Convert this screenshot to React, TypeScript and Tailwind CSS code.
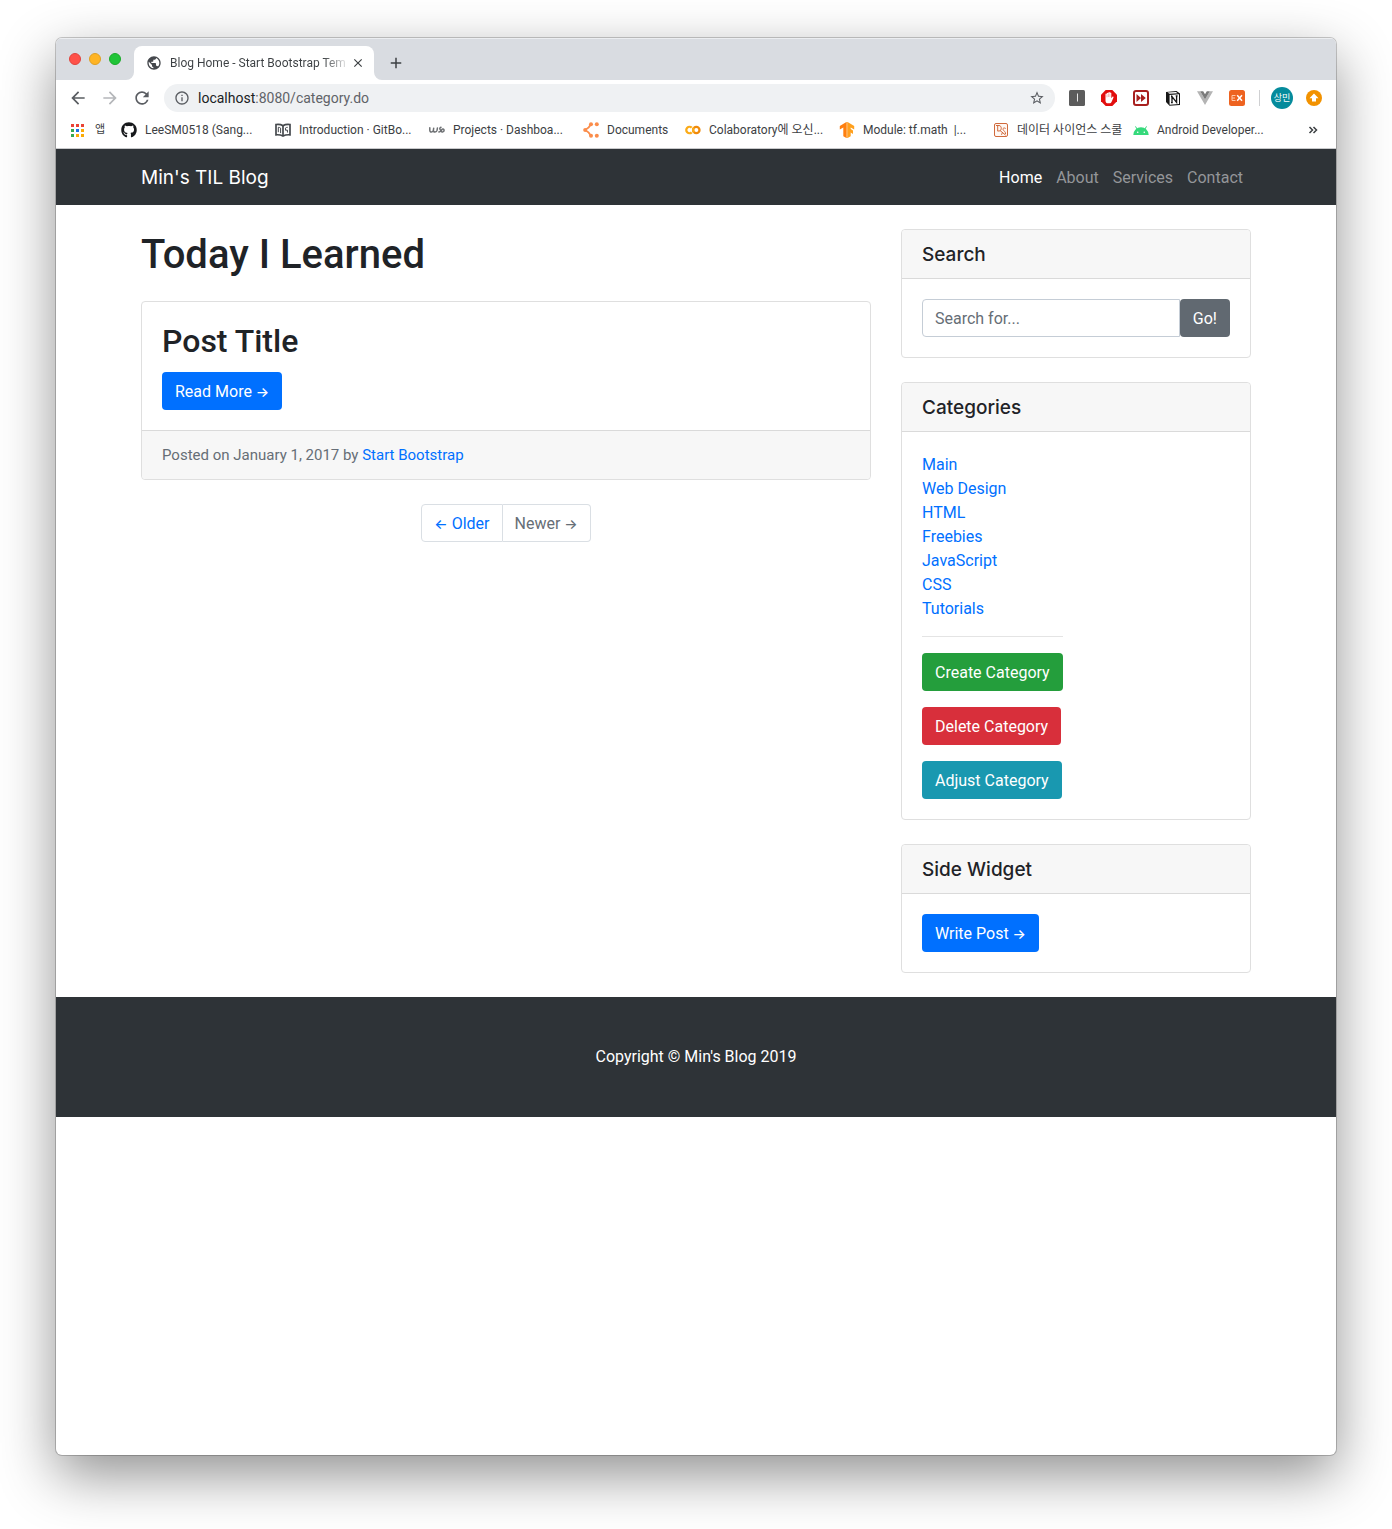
import type { ReactNode } from "react";
import { FaGithub } from "react-icons/fa";
import {
  MdAdd,
  MdArrowBack,
  MdArrowForward,
  MdClose,
  MdInfoOutline,
  MdPublic,
  MdRefresh,
  MdStarBorder,
} from "react-icons/md";

/* ---------- bookmark icons ---------- */

function AppsIcon() {
  const colors = ["#ea4335", "#ea4335", "#ea4335", "#34a853", "#1a73e8", "#fbab05", "#34a853", "#fbab05", "#fbab05"];
  return (
    <svg viewBox="0 0 16 16" className="size-4">
      {colors.map((c, i) => (
        <rect key={i} x={1 + (i % 3) * 5} y={2 + Math.floor(i / 3) * 5} width="3" height="3" fill={c} />
      ))}
    </svg>
  );
}

function GitBookIcon() {
  return (
    <svg viewBox="0 0 16 16" className="size-4" fill="none" stroke="#45494d" strokeWidth="1.700">
      <path d="M1 2.500c2.800-.4 5-.1 7 1.200 2-1.300 4.200-1.600 7-1.200v10.300c-2.800-.2-5 .1-7 1.300-2-1.200-4.200-1.500-7-1.300z" />
      <path d="M8 3.700V14" />
      <path d="M3.300 5.300c1 0 1.800.3 2.300.8v5M3.300 5.300v4.900M12.700 5.300c-1 0-1.700.3-2.300.8l.2 2.200 1.700-.3.200 2.500" strokeWidth="1" />
    </svg>
  );
}

function WsIcon() {
  return (
    <svg viewBox="0 0 16 16" className="size-4" fill="none" stroke="#6d7073" strokeWidth="1.500" strokeLinecap="round" strokeLinejoin="round">
      <path d="M.8 5.800v2.400c0 2.600 3.200 2.400 3.600 0l.3-2-.3 2c0 2.400 3.200 2.400 3.700 0l.3-2.200" />
      <path d="M12 5.200c-1.500.6-1.500 1.800-.7 2.500 1 .9.300 2.300-1.500 2.200M12.200 9.300c.7 1.200 2.900.6 2.900-1.100 0-1.500-1.700-1.700-2.300-.6-.3.600-.4 1.100-.6 1.700z" />
    </svg>
  );
}

function DocumentsIcon() {
  return (
    <svg viewBox="0 0 16 16" className="size-4" fill="#fb8d4b">
      <path d="M8 2.200C6.500 5 5 6.500 2.200 8 5 9.500 6.500 11 8 13.800" fill="none" stroke="#fb8d4b" strokeWidth="1.800" />
      <circle cx="2.200" cy="8" r="2" />
      <circle cx="8" cy="2.200" r="2" />
      <circle cx="8" cy="13.800" r="2" />
      <circle cx="13.800" cy="2.200" r="2" />
      <circle cx="13.800" cy="13.800" r="2" />
    </svg>
  );
}

function ColabIcon() {
  return (
    <svg viewBox="0 0 16 16" className="size-4" fill="none" strokeWidth="2.300">
      <path d="M6.700 5.700a3.200 3.200 0 1 0 0 4.600" stroke="#fbab18" />
      <circle cx="11.300" cy="8" r="3.200" stroke="#f08a0a" />
      <path d="M9 5.700a3.200 3.200 0 0 0 0 4.600" stroke="#fbab18" />
    </svg>
  );
}

function TensorFlowIcon() {
  return (
    <svg viewBox="0 0 16 16" className="size-4">
      <path d="M7.400 0v16l-3.100-1.800V5.500L.8 7.500V3.900z" fill="#ff7f10" />
      <path d="M8.600 0v16l3.100-1.800v-3.600l2.300 1.300V8.500l-2.300-1.400V5.500l3.500 2V3.900z" fill="#ffa01e" />
      <path d="M7.400 0h1.200v16H7.400z" fill="#ff9116" />
    </svg>
  );
}

function DataSchoolIcon() {
  return (
    <svg viewBox="0 0 16 16" className="size-4" fill="none" stroke="#d06a3c">
      <rect x="1.500" y="1.500" width="13" height="13" rx="1.500" fill="#fff8f4" />
      <path d="M3 3.500h3c3 0 3 5.500 0 5.500H4.500M4.700 3.500V9M12.700 6.500c-1.500-1.200-3.400-.2-2.500 1.300.6 1.200 2.700 2.200 2.300 4.200M7 8.500l5.700 4.700M8.500 12.800l1-2.500" />
    </svg>
  );
}

function AndroidIcon() {
  return (
    <svg viewBox="0 0 16 16" className="size-4">
      <path d="M.3 13a7.700 7.700 0 0 1 15.400 0z" fill="#35d97b" />
      <path d="M4 7 2.500 4.400M12 7l1.500-2.600" stroke="#35d97b" strokeWidth="1" />
      <circle cx="4.700" cy="10.200" r=".8" fill="#fff" />
      <circle cx="11.300" cy="10.200" r=".8" fill="#fff" />
    </svg>
  );
}

/* ---------- extension icons ---------- */

function BarExtension() {
  return (
    <svg viewBox="0 0 16 16" className="size-4">
      <rect width="16" height="16" rx="1.500" fill="#5c5c5c" />
      <path d="M8.500 3.500v8" stroke="#e8e8e8" strokeWidth="1" />
    </svg>
  );
}

function AdBlockExtension() {
  return (
    <svg viewBox="0 0 16 16" className="size-4">
      <path d="M4.700 0h6.600L16 4.700v6.600L11.300 16H4.700L0 11.300V4.700z" fill="#e20e0e" />
      <path
        d="M4.500 8V4.300a.7.700 0 0 1 1.400 0V3.200a.8.800 0 0 1 1.500 0v-.6a.8.800 0 0 1 1.500 0v.7a.7.700 0 0 1 1.400 0v5l1-1.400c.5-.6 1.400-.2 1.200.6l-2 4.500c-.4.900-1 1.300-2 1.300H7.200c-1.700 0-2.700-1-2.700-2.600z"
        fill="#fff"
      />
      <path d="M5.900 4.300v3M7.400 3.500v3.500M8.900 3.500v3.500" stroke="#e20e0e" strokeWidth=".3" />
    </svg>
  );
}

function FastForwardExtension() {
  return (
    <svg viewBox="0 0 16 16" className="size-4">
      <rect x="1" y="1" width="14" height="14" rx="2" fill="#fff" stroke="#a8201f" strokeWidth="2" />
      <path d="M3.500 4v8L8 8zM8 4v8l4.800-4z" fill="#a8201f" />
    </svg>
  );
}

function NotionExtension() {
  return (
    <svg viewBox="0 0 16 16" className="size-4">
      <path d="M1 2 11.500 1 15 3.500V15l-10.500.8L1 12z" fill="#161616" />
      <path d="M2.500 2.600 11 1.900l1.800 1.300-8.300.6z" fill="#fff" />
      <path d="M4.600 4.900 14 4.300v9.800l-9.400.6z" fill="#fff" />
      <path d="M7 12.700V6.500l4.600 5.800V5.900M6 6.500h1.600M10.700 5.900h1.900M6 12.700h1.800" fill="none" stroke="#161616" strokeWidth="1.300" />
    </svg>
  );
}

function VueExtension() {
  return (
    <svg viewBox="0 0 16 16" className="size-4">
      <path d="M0 1.200h3.200L8 9.400l4.800-8.200H16L8 15z" fill="#b4b4b4" />
      <path d="M3.200 1.200h3L8 4.300l1.800-3.100h3L8 9.400z" fill="#7b7b7b" />
    </svg>
  );
}

function ExExtension() {
  return (
    <svg viewBox="0 0 16 16" className="size-4">
      <rect width="16" height="16" rx="2.500" fill="#ee6320" />
      <path d="M6.500 5.500H3v5h3.500M3 8h3" fill="none" stroke="#ffc9a8" strokeWidth="1" />
      <path d="m8.200 5.200 4.800 5.600M13 5.200l-4.800 5.600" stroke="#fff" strokeWidth="1.500" />
    </svg>
  );
}

function UpdateIcon() {
  return (
    <svg viewBox="0 0 16 16" className="size-4">
      <circle cx="8" cy="8" r="8" fill="#f29200" />
      <path d="m8 3.500 4.500 4.700H10v3.300H6V8.200H3.500z" fill="#fff" />
    </svg>
  );
}

/* ---------- browser chrome ---------- */

const bookmarks: { label: string; icon: ReactNode; width: string }[] = [
  { label: "LeeSM0518 (Sang...", icon: <FaGithub className="size-4 text-[#17191c]" />, width: "w-[138px]" },
  { label: "Introduction · GitBo...", icon: <GitBookIcon />, width: "w-[138px]" },
  { label: "Projects · Dashboa...", icon: <WsIcon />, width: "w-[138px]" },
  { label: "Documents", icon: <DocumentsIcon />, width: "w-[86px]" },
  { label: "Colaboratory에 오신...", icon: <ColabIcon />, width: "w-[138px]" },
  { label: "Module: tf.math  |...", icon: <TensorFlowIcon />, width: "w-[138px]" },
  { label: "데이터 사이언스 스쿨", icon: <DataSchoolIcon />, width: "w-[124px]" },
  { label: "Android Developer...", icon: <AndroidIcon />, width: "w-[138px]" },
];

function TabStrip() {
  return (
    <div className="flex h-[42px] items-end border-t border-[#eceef1] bg-[#d9dce1]">
      <div className="flex gap-2 self-center pb-0.5 pl-[13px]">
        <button aria-label="Close window" className="size-3 rounded-full border border-[#e0443e] bg-[#ff5149]" />
        <button aria-label="Minimize window" className="size-3 rounded-full border border-[#dfa023] bg-[#ffb424]" />
        <button aria-label="Zoom window" className="size-3 rounded-full border border-[#1aab29] bg-[#20c438]" />
      </div>
      <div className="relative ml-[13px] flex h-[34px] w-60 items-center rounded-t-lg bg-white pr-2 pl-3">
        <svg viewBox="0 0 8 8" className="absolute bottom-0 -left-2 size-2 fill-white">
          <path d="M8 0v8H0a8 8 0 0 0 8-8z" />
        </svg>
        <svg viewBox="0 0 8 8" className="absolute -right-2 bottom-0 size-2 fill-white">
          <path d="M0 0v8h8a8 8 0 0 1-8-8z" />
        </svg>
        <MdPublic className="size-4 shrink-0 text-[#45484d]" />
        <div className="ml-2 flex-1 bg-linear-to-r from-[#3c4043] from-85% to-transparent bg-clip-text text-xs whitespace-nowrap text-transparent">
          Blog Home - Start Bootstrap Tem
        </div>
        <button aria-label="Close tab" className="grid size-4 place-items-center">
          <MdClose className="size-3.5 text-[#3c4043]" />
        </button>
      </div>
      <button aria-label="New tab" className="ml-3 grid h-[34px] w-5 place-items-center">
        <MdAdd className="size-[18px] text-[#3c4043]" />
      </button>
    </div>
  );
}

function Toolbar() {
  return (
    <div className="flex h-9 items-center px-3.5 text-[#5a5d62]">
      <div className="mr-3 -ml-0.5 flex gap-3">
        <button aria-label="Back">
          <MdArrowBack className="size-5" />
        </button>
        <button aria-label="Forward" className="text-[#b5b7ba]">
          <MdArrowForward className="size-5" />
        </button>
        <button aria-label="Reload">
          <MdRefresh className="size-5" />
        </button>
      </div>
      <div className="flex h-7 min-w-0 flex-1 items-center rounded-full bg-[#eff1f3] px-2.5">
        <MdInfoOutline className="size-4 shrink-0" />
        <div className="ml-2 flex-1 text-sm text-[#5f6368]">
          <span className="text-[#202124]">localhost</span>:8080/category.do
        </div>
        <button aria-label="Bookmark this page">
          <MdStarBorder className="size-4" />
        </button>
      </div>
      <div className="ml-3.5 flex gap-4">
        <BarExtension />
        <AdBlockExtension />
        <FastForwardExtension />
        <NotionExtension />
        <VueExtension />
        <ExExtension />
      </div>
      <div className="mr-[11px] ml-3.5 h-4 w-px bg-[#cfd0d2]" />
      <button className="grid size-[22px] place-items-center rounded-full bg-[#058b9c] text-[9px] leading-none text-white">상민</button>
      <button aria-label="Update" className="ml-[13px]">
        <UpdateIcon />
      </button>
    </div>
  );
}

function BookmarksBar() {
  return (
    <div className="flex h-[33px] items-center gap-4 border-b border-[#c9cacc] px-3.5 pb-1 text-xs text-[#3c4043]">
      <a href="#" className="flex w-[35px] shrink-0 items-center justify-between whitespace-nowrap text-[11px]">
        <AppsIcon />앱
      </a>
      {bookmarks.map((b) => (
        <a key={b.label} href="#" className={`flex shrink-0 items-center gap-2 whitespace-pre ${b.width}`}>
          <span className="shrink-0">{b.icon}</span>
          {b.label}
        </a>
      ))}
      <button aria-label="More bookmarks" className="mr-1 ml-auto">
        <svg viewBox="0 0 10 10" className="size-2.5" fill="none" stroke="#3c4043" strokeWidth="1.500">
          <path d="m1.500 2 3 3-3 3M5.500 2l3 3-3 3" />
        </svg>
      </button>
    </div>
  );
}

/* ---------- blog ---------- */

const categories = ["Main", "Web Design", "HTML", "Freebies", "JavaScript", "CSS", "Tutorials"];

function Arrow({ children }: { children: string }) {
  return <span className="text-sm leading-none font-medium">{children}</span>;
}

function Button({ color, children }: { color: string; children: ReactNode }) {
  return <button className={`block h-[38px] rounded px-[13px] pt-px whitespace-nowrap text-white ${color}`}>{children}</button>;
}

function Widget({ title, children }: { title: string; children: ReactNode }) {
  return (
    <section className="mb-6 rounded border border-[#dfdfdf]">
      <h5 className="rounded-t border-b border-[#dadada] bg-[#f7f7f7] px-5 pt-[13px] pb-[11px] font-['Inter'] text-[19px] leading-6 font-medium">
        {title}
      </h5>
      <div className="p-5">{children}</div>
    </section>
  );
}

function NavBar() {
  return (
    <nav className="bg-[#2e3337]">
      <div className="mx-auto flex h-14 max-w-[1140px] items-center justify-between px-[15px] pt-0.5">
        <a href="#" className="font-['Inter'] text-[19px] text-white">
          Min's TIL Blog
        </a>
        <div className="flex gap-3.5 pr-2 text-[#949699]">
          <a href="#" className="text-white">
            Home
          </a>
          <a href="#">About</a>
          <a href="#">Services</a>
          <a href="#">Contact</a>
        </div>
      </div>
    </nav>
  );
}

function Posts() {
  return (
    <main className="w-2/3 px-[15px]">
      <h1 className="mt-[26px] mb-[22px] text-[40px] leading-[48px] font-medium">Today I Learned</h1>
      <article className="mb-6 rounded border border-[#dfdfdf]">
        <div className="p-5">
          <h2 className="mb-3 text-[32px] leading-[38px] font-medium">Post Title</h2>
          <Button color="bg-[#0070ff]">
            Read More <Arrow>→</Arrow>
          </Button>
        </div>
        <div className="rounded-b border-t border-[#dadada] bg-[#f7f7f7] px-5 py-3 text-[15px] leading-6 text-[#666e76]">
          Posted on January 1, 2017 by{" "}
          <a href="#" className="text-[#0070ff]">
            Start Bootstrap
          </a>
        </div>
      </article>
      <div className="mb-6 flex justify-center">
        <a href="#" className="h-[38px] rounded-l border border-[#dadfe4] px-3 pt-px leading-9 text-[#0070ff]">
          <Arrow>←</Arrow> Older
        </a>
        <a href="#" className="h-[38px] rounded-r border border-l-0 border-[#dadfe4] px-3 pt-px leading-9 text-[#666e76]">
          Newer <Arrow>→</Arrow>
        </a>
      </div>
    </main>
  );
}

function Sidebar() {
  return (
    <aside className="w-1/3 px-[15px] pt-6">
      <Widget title="Search">
        <form className="flex" onSubmit={(e) => e.preventDefault()}>
          <input
            type="text"
            aria-label="Search for"
            placeholder="Search for..."
            className="h-[38px] min-w-0 flex-1 rounded-l border border-[#c5cdd6] px-3 outline-none placeholder:text-[#666e76]"
          />
          <Button color="bg-[#616971]">Go!</Button>
        </form>
      </Widget>
      <Widget title="Categories">
        <div className="w-fit">
          <ul className="pt-px">
            {categories.map((c) => (
              <li key={c}>
                <a href="#" className="text-[#0070ff]">
                  {c}
                </a>
              </li>
            ))}
          </ul>
          <hr className="mt-[15px] mb-4 border-[#e4e4e4]" />
          <div className="flex flex-col items-start gap-4">
            <Button color="bg-[#249e3c]">Create Category</Button>
            <Button color="bg-[#d82f3b]">Delete Category</Button>
            <Button color="bg-[#1998b0]">Adjust Category</Button>
          </div>
        </div>
      </Widget>
      <Widget title="Side Widget">
        <Button color="bg-[#0070ff]">
          Write Post <Arrow>→</Arrow>
        </Button>
      </Widget>
    </aside>
  );
}

export default function App() {
  return (
    <div className="flow-root min-h-screen bg-white font-['Roboto','Inter','Noto_Sans_CJK_KR',sans-serif] text-base text-[#1f2327]">
      <div className="mx-14 mt-[38px] mb-[74px] min-h-[calc(100vh-112px)] overflow-hidden rounded-md bg-white shadow-[0_0_0_1px_rgba(0,0,0,0.2),0_20px_56px_rgba(0,0,0,0.44)]">
        <TabStrip />
        <Toolbar />
        <BookmarksBar />
        <NavBar />
        <div className="mx-auto flex max-w-[1140px] items-start">
          <Posts />
          <Sidebar />
        </div>
        <footer className="bg-[#2e3337] py-12 text-center text-white">Copyright © Min's Blog 2019</footer>
      </div>
    </div>
  );
}
